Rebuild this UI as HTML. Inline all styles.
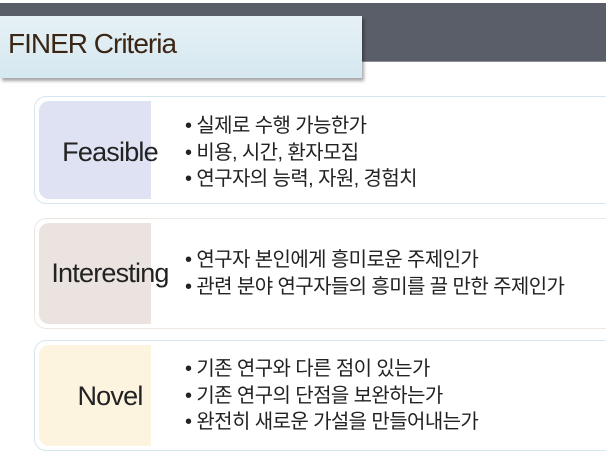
<!DOCTYPE html>
<html><head><meta charset="utf-8"><style>
body{margin:0;width:606px;height:453px;background:#fff;position:relative;overflow:hidden;font-family:"Liberation Sans","Noto Sans CJK KR",sans-serif}
.bar{position:absolute;left:0;top:3px;width:606px;height:58px;background:#5a5e68;border-bottom:1px solid #8a8e96}
.title{position:absolute;left:0;top:16px;width:362px;height:62px;background:linear-gradient(#e6f1f6,#d6e8f0);box-shadow:2px 3px 3px rgba(0,0,0,.35)}
.title span{position:absolute;left:8px;top:12px;font-size:28px;color:#3b2616;letter-spacing:-1px}
.card{position:absolute;left:34px;width:600px;border-radius:12px;background:#fff;border:1.5px solid}
.lab{position:absolute;left:4px;top:4px;bottom:4px;width:112px;border-radius:10px 0 0 10px}
.lt{position:absolute;left:0;width:150px;text-align:center;font-size:27px;color:#222;letter-spacing:-0.8px}
.txt{position:absolute;left:150px;font-size:20px;color:#222;line-height:26.5px;letter-spacing:-0.6px;white-space:nowrap}
</style></head><body>
<div class="bar"></div>
<div class="title"><span>FINER Criteria</span></div>
<div class="card" style="top:96px;height:106px;border-color:#d4e6ee">
<div class="lab" style="background:#dfe2f3"></div><div class="lt" style="top:40px">Feasible</div>
<div class="txt" style="top:16px">• 실제로 수행 가능한가<br>• 비용, 시간, 환자모집<br>• 연구자의 능력, 자원, 경험치</div></div>
<div class="card" style="top:218px;height:109px;border-color:#efe8e2">
<div class="lab" style="background:#ebe3df"></div><div class="lt" style="top:39px">Interesting</div>
<div class="txt" style="top:28px">• 연구자 본인에게 흥미로운 주제인가<br>• 관련 분야 연구자들의 흥미를 끌 만한 주제인가</div></div>
<div class="card" style="top:340px;height:109px;border-color:#d4e6ee">
<div class="lab" style="background:#fdf4e0"></div><div class="lt" style="top:40px">Novel</div>
<div class="txt" style="top:15px">• 기존 연구와 다른 점이 있는가<br>• 기존 연구의 단점을 보완하는가<br>• 완전히 새로운 가설을 만들어내는가</div></div>
</body></html>
